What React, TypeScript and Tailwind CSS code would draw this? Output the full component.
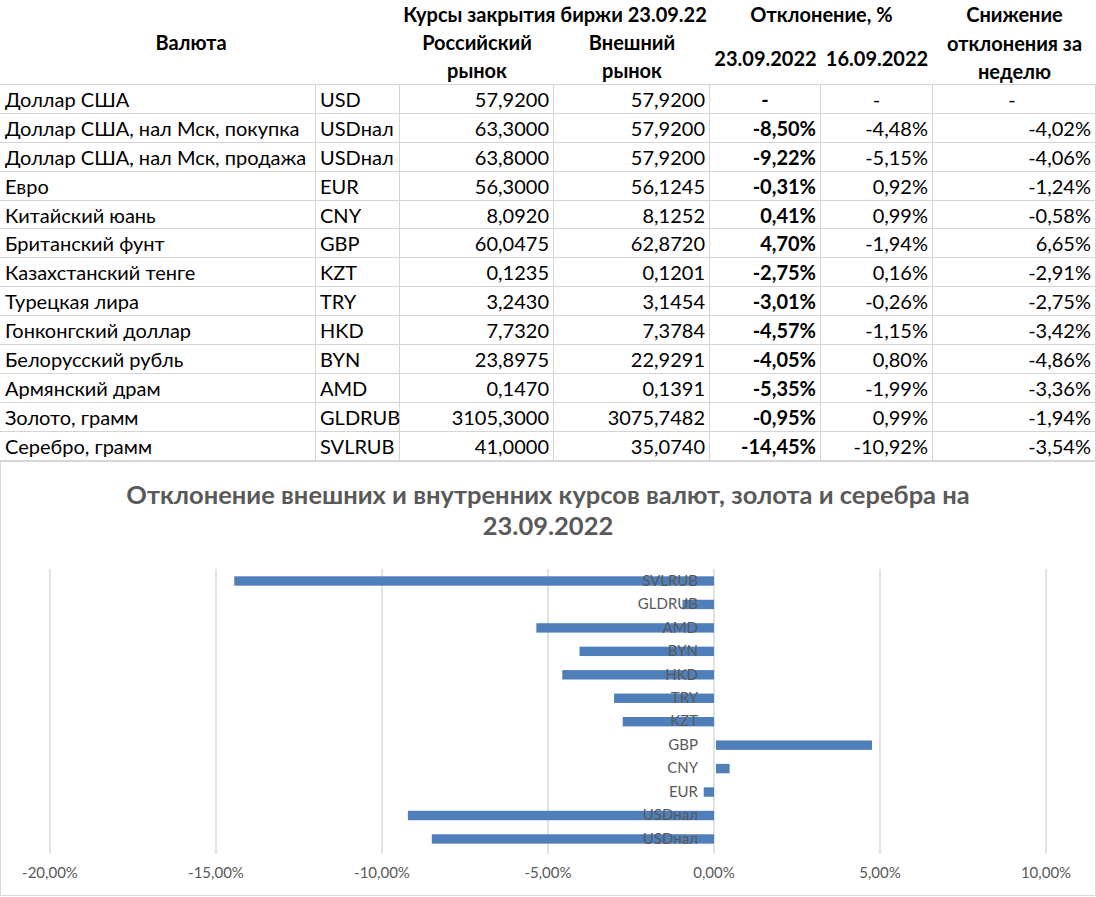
import React from "react"

const rows: string[][] = [
  ["Доллар США", "USD", "57,9200", "57,9200", "-", "-", "-"],
  ["Доллар США, нал Мск, покупка", "USDнал", "63,3000", "57,9200", "-8,50%", "-4,48%", "-4,02%"],
  ["Доллар США, нал Мск, продажа", "USDнал", "63,8000", "57,9200", "-9,22%", "-5,15%", "-4,06%"],
  ["Евро", "EUR", "56,3000", "56,1245", "-0,31%", "0,92%", "-1,24%"],
  ["Китайский юань", "CNY", "8,0920", "8,1252", "0,41%", "0,99%", "-0,58%"],
  ["Британский фунт", "GBP", "60,0475", "62,8720", "4,70%", "-1,94%", "6,65%"],
  ["Казахстанский тенге", "KZT", "0,1235", "0,1201", "-2,75%", "0,16%", "-2,91%"],
  ["Турецкая лира", "TRY", "3,2430", "3,1454", "-3,01%", "-0,26%", "-2,75%"],
  ["Гонконгский доллар", "HKD", "7,7320", "7,3784", "-4,57%", "-1,15%", "-3,42%"],
  ["Белорусский рубль", "BYN", "23,8975", "22,9291", "-4,05%", "0,80%", "-4,86%"],
  ["Армянский драм", "AMD", "0,1470", "0,1391", "-5,35%", "-1,99%", "-3,36%"],
  ["Золото, грамм", "GLDRUB", "3105,3000", "3075,7482", "-0,95%", "0,99%", "-1,94%"],
  ["Серебро, грамм", "SVLRUB", "41,0000", "35,0740", "-14,45%", "-10,92%", "-3,54%"],
]

const bars: [string, number][] = [
  ["SVLRUB", -14.45],
  ["GLDRUB", -0.95],
  ["AMD", -5.35],
  ["BYN", -4.05],
  ["HKD", -4.57],
  ["TRY", -3.01],
  ["KZT", -2.75],
  ["GBP", 4.7],
  ["CNY", 0.41],
  ["EUR", -0.31],
  ["USDнал", -9.22],
  ["USDнал", -8.5],
]

const ticks = ["-20,00%", "-15,00%", "-10,00%", "-5,00%", "0,00%", "5,00%", "10,00%"]

const cols = "grid grid-cols-[316px_84px_154px_156px_111px_112px_163px]"

function Chart() {
  // plot coords: x = 713 + v * 33.2, category step 23.45
  const zero = 713
  const unit = 33.2
  const step = 23.45
  const top = 28
  return (
    <svg width="1094" height="354" className="block">
      {ticks.map((t, i) => {
        const x = 49 + 166 * i
        return (
          <g key={t}>
            <line x1={x} x2={x} y1={top} y2={top + 285} stroke="#d9d9d9" strokeWidth="1.5" />
            <text x={x} y={333} textAnchor="middle" dominantBaseline="middle" fontSize="15" fill="#595959">
              {t}
            </text>
          </g>
        )
      })}
      {bars.map(([name, v], k) => {
        const cy = top + 12 + step * k
        const x = v < 0 ? zero + v * unit : zero + 2
        const w = Math.abs(v) * unit
        return (
          <g key={k}>
            <rect x={x} y={cy - 4.7} width={w} height={9.4} fill="#4f7fbb" />
            <text x={697} y={cy + 1} textAnchor="end" dominantBaseline="middle" fontSize="15" fill="#595959">
              {name}
            </text>
          </g>
        )
      })}
    </svg>
  )
}

export default function App() {
  return (
    <div className="w-[1096px] h-[897px] overflow-hidden bg-white text-black font-['Lato','Liberation_Sans',sans-serif] text-[20px]">
      {/* Header */}
      <div className={`${cols} grid-rows-[28px_28px_28px] border-b border-b-[#d4d4d4] font-bold leading-[28px]`}>
        <div className="col-span-2 row-span-3 flex items-center justify-center pr-[18px]">Валюта</div>
        <div className="col-start-3 col-span-2 row-start-1 text-center">Курсы закрытия биржи 23.09.22</div>
        <div className="col-start-3 row-start-2 row-span-2 text-center">Российский<br />рынок</div>
        <div className="col-start-4 row-start-2 row-span-2 text-center">Внешний<br />рынок</div>
        <div className="col-start-5 col-span-2 row-start-1 text-center">Отклонение, %</div>
        <div className="col-start-5 row-start-2 row-span-2 flex items-center justify-center pt-[4px]">23.09.2022</div>
        <div className="col-start-6 row-start-2 row-span-2 flex items-center justify-center pt-[4px]">16.09.2022</div>
        <div className="col-start-7 row-start-1 row-span-3 text-center leading-[28.5px]">
          Снижение<br />отклонения за<br />неделю
        </div>
      </div>

      {/* Rows */}
      {rows.map((r, i) => (
        <div key={i} className={`${cols} h-[28.9px] border-b border-[#d4d4d4] leading-none`}>
          <div className="flex items-center border-r border-[#d4d4d4] pl-[5px]">{r[0]}</div>
          <div className="flex items-center border-r border-[#d4d4d4] pl-[4px]">{r[1]}</div>
          <div className="flex items-center justify-end border-r border-[#d4d4d4] pr-[4px]">{r[2]}</div>
          <div className="flex items-center justify-end border-r border-[#d4d4d4] pr-[4px]">{r[3]}</div>
          <div className={`flex items-center border-r border-[#d4d4d4] font-bold ${r[4] === "-" ? "justify-center" : "justify-end pr-[4px]"}`}>{r[4]}</div>
          <div className={`flex items-center border-r border-[#d4d4d4] ${r[5] === "-" ? "justify-center" : "justify-end pr-[4px]"}`}>{r[5]}</div>
          <div className={`flex items-center border-r border-[#d4d4d4] ${r[6] === "-" ? "justify-center pr-[4px]" : "justify-end pr-[4px]"}`}>{r[6]}</div>
        </div>
      ))}

      {/* Chart */}
      <div className="border border-[#d9d9d9] w-[1096px]">
        <div className="pt-[17px] text-center text-[25.5px] font-bold leading-[31px] text-[#595959]">
          Отклонение внешних и внутренних курсов валют, золота и серебра на<br />23.09.2022
        </div>
        <Chart />
      </div>
    </div>
  )
}
